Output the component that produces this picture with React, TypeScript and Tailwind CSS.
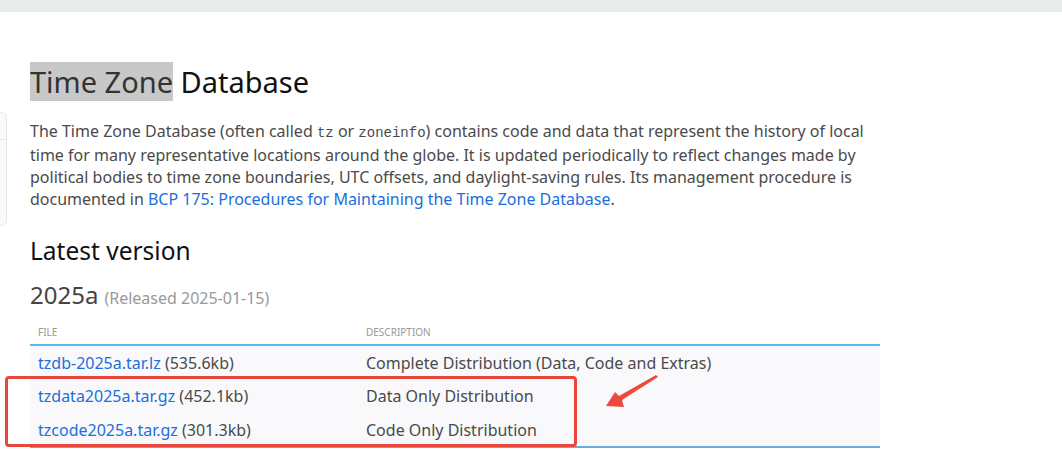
const files = [
  { name: "tzdb-2025a.tar.lz", size: "(535.6kb)", desc: "Complete Distribution (Data, Code and Extras)" },
  { name: "tzdata2025a.tar.gz", size: "(452.1kb)", desc: "Data Only Distribution" },
  { name: "tzcode2025a.tar.gz", size: "(301.3kb)", desc: "Code Only Distribution" },
];

export default function App() {
  return (
    <div className="relative w-[1062px] h-[454px] overflow-hidden bg-white font-['Noto_Sans',sans-serif]">
      <div className="h-3 bg-[#e8ebec]" />

      {/* clipped side panel on the left edge */}
      <div className="absolute left-[-200px] top-[112px] w-[207px] h-[114px] rounded-r-md border border-[#e5e7eb] bg-[#fafafb]">
        <div className="h-[27px] border-b border-[#e5e7eb]" />
      </div>

      <div className="pl-[30px] w-[880px]">
        <h1 className="mt-[50px] text-[29px] leading-[39px] text-[#111]">
          <span className="bg-[#c8c8c8] text-[#333]">Time Zone</span> Database
        </h1>

        <p className="mt-[19px] text-[16px] leading-[22px] text-[#4a4a4a] w-[840px]">
          The Time Zone Database (often called{" "}
          <code className="font-['Liberation_Mono',monospace] text-[14px]">tz</code> or{" "}
          <code className="font-['Liberation_Mono',monospace] text-[14px]">zoneinfo</code>) contains code and
          data that represent the history of local time for many representative locations around the globe. It
          is updated periodically to reflect changes made by political bodies to time zone boundaries, UTC
          offsets, and daylight-saving rules. Its management procedure is documented in{" "}
          <a className="text-[#1a6fdc]">BCP 175: Procedures for Maintaining the Time Zone Database</a>.
        </p>

        <h2 className="mt-[25px] text-[24.5px] leading-[32px] text-[#111]">Latest version</h2>

        <div className="mt-[12px] flex items-baseline gap-1.5 leading-[32px]">
          <span className="text-[24px] text-[#444]">2025a</span>
          <span className="text-[16px] text-[#999]">(Released 2025-01-15)</span>
        </div>

        <table className="mt-[9px] w-[850px] border-collapse text-left">
          <thead>
            <tr className="border-b-2 border-[#5cb8ea]">
              <th className="w-[336px] pl-2 pb-[3px] text-[10px] font-normal leading-[18px] text-[#999]">FILE</th>
              <th className="pb-[3px] text-[10px] font-normal leading-[18px] text-[#999]">DESCRIPTION</th>
            </tr>
          </thead>
          <tbody className="bg-[#f9f9fb] border-b-2 border-[#6aaed8]">
            {files.map((f) => (
              <tr key={f.name} className="h-[34px]">
                <td className="pl-2 text-[16px] text-[#4a4a4a]">
                  <a className="text-[#1a6fdc]">{f.name}</a> {f.size}
                </td>
                <td className="text-[16px] text-[#4a4a4a]">{f.desc}</td>
              </tr>
            ))}
          </tbody>
        </table>
      </div>

      {/* annotation */}
      <div className="absolute left-[5px] top-[376px] w-[572px] h-[71px] rounded-[4px] border-[3px] border-[#e8473d]" />
      <svg className="absolute left-[600px] top-[370px]" width="64" height="44" viewBox="0 0 64 44">
        <path d="M6 36 L15 22 L19 26 L56 5 L58 7 L22 30 L24 37 Z" fill="#ec4a3e" />
      </svg>
    </div>
  );
}
